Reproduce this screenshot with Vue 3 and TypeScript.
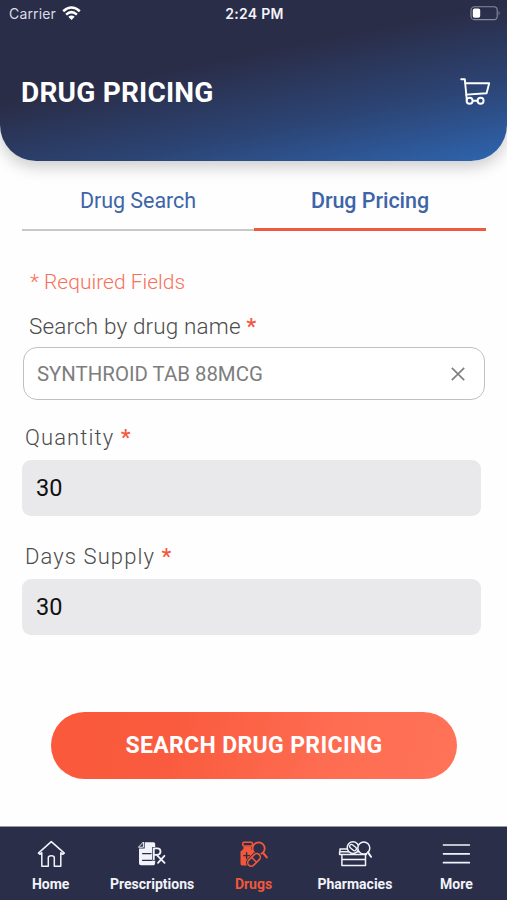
<script setup lang="ts">
import { ref } from 'vue'

type TabId = 'search' | 'pricing'
type NavId = 'home' | 'prescriptions' | 'drugs' | 'pharmacies' | 'more'

const activeTab = ref<TabId>('pricing')
const activeNav = ref<NavId>('drugs')
const drugName = ref('SYNTHROID TAB 88MCG')
const quantity = ref('30')
const daysSupply = ref('30')

const tabs: { id: TabId; label: string }[] = [
  { id: 'search', label: 'Drug Search' },
  { id: 'pricing', label: 'Drug Pricing' },
]

const navItems: { id: NavId; label: string }[] = [
  { id: 'home', label: 'Home' },
  { id: 'prescriptions', label: 'Prescriptions' },
  { id: 'drugs', label: 'Drugs' },
  { id: 'pharmacies', label: 'Pharmacies' },
  { id: 'more', label: 'More' },
]
</script>

<template>
  <div class="screen">
    <header class="header">
      <div class="status">
        <div class="carrier">
          <span>Carrier</span>
          <svg class="wifi" width="19" height="15" viewBox="0 0 19 15" fill="none" stroke="#fff" stroke-width="2.5">
            <path d="M1.2 5.3 Q9.5 -2.2 17.8 5.3" />
            <path d="M4.1 8.6 Q9.5 3.7 14.9 8.6" />
            <path d="M9.5 14 L6.3 10.8 Q9.5 8.2 12.7 10.8 Z" fill="#fff" stroke="none" />
          </svg>
        </div>
        <span class="time">2:24 PM</span>
        <svg class="battery" width="31" height="15" viewBox="0 0 31 15">
          <rect x="1" y="0.8" width="26.2" height="12.8" rx="3.4" fill="none" stroke="#888a9b" stroke-width="1.1" />
          <rect x="2.8" y="2.6" width="7.4" height="9.2" rx="1.8" fill="#fff" />
          <path d="M28.6 5 Q30.6 7.2 28.6 9.4 Z" fill="#888a9b" />
        </svg>
      </div>
      <div class="title-row">
        <h1>DRUG PRICING</h1>
        <svg class="cart" width="32" height="28" viewBox="0 0 32 28" fill="none" stroke="#fff" stroke-width="1.9" stroke-linecap="round" stroke-linejoin="round">
          <path d="M1.2 1.2 H4.8 L6.8 22" />
          <path d="M5.5 5.2 H29.2 L26.6 15.2 L6.2 16.6" />
          <circle cx="9.6" cy="22.7" r="3" />
          <circle cx="20.6" cy="22.7" r="3" />
          <path d="M12.8 22.7 H17.4" />
        </svg>
      </div>
    </header>

    <main class="content">
      <nav class="tabs">
        <button
          v-for="tab in tabs"
          :key="tab.id"
          class="tab"
          :class="{ active: tab.id === activeTab }"
          @click="activeTab = tab.id"
        >
          <span>{{ tab.label }}</span>
        </button>
      </nav>

      <p class="required">* Required Fields</p>

      <label class="label label-drug">Search by drug name <b>*</b></label>
      <div class="search-box">
        <span>{{ drugName }}</span>
        <svg width="16" height="16" viewBox="0 0 16 16" fill="none" stroke="#808080" stroke-width="1.7" @click="drugName = ''">
          <path d="M1.8 1.8 L14.2 14.2 M14.2 1.8 L1.8 14.2" />
        </svg>
      </div>

      <label class="label label-quantity">Quantity <b>*</b></label>
      <div class="field">{{ quantity }}</div>

      <label class="label label-days">Days Supply <b>*</b></label>
      <div class="field">{{ daysSupply }}</div>

      <button class="submit"><span>SEARCH DRUG PRICING</span></button>
    </main>

    <nav class="bottom">
      <button
        v-for="item in navItems"
        :key="item.id"
        class="nav-item"
        :class="{ active: item.id === activeNav }"
        @click="activeNav = item.id"
      >
        <svg class="nav-icon" width="34" height="28" viewBox="0 0 34 28" fill="none" stroke="currentColor" stroke-linecap="round" stroke-linejoin="round">
          <g v-if="item.id === 'home'" stroke-width="1.5">
            <path d="M17.3 1.6 L4.4 13.1 L5.8 14.3 L7.8 12.7 V26.2 H14.3 V17.8 Q14.3 15.8 17.3 15.8 Q20.3 15.8 20.3 17.8 V26.2 H26.8 V12.7 L28.9 14.3 L30.3 13.1 Z" />
          </g>
          <g v-else-if="item.id === 'prescriptions'">
            <path d="M9.7 2.2 H18.5 Q20.2 2.2 20.2 4 V7 H17.2 V20.8 H20.2 V22.5 Q20.2 25.2 18.2 25.2 H6 Q4 25.2 4 23.2 V8.5 H9.7 Z" fill="currentColor" stroke="none" />
            <path d="M8.4 2.4 V7.2 H3.8 Z" stroke-width="1" />
            <path d="M7.6 13.6 H16 M7.6 20.4 H16.4" stroke="#2a2e49" stroke-width="1.3" />
            <path d="M18.8 19.2 V8.4 H22.3 A3.2 3.2 0 0 1 22.3 14.8 H18.8 M21.6 14.8 L29.6 22.8 M29.4 15.8 L23 22.8" stroke-width="1.8" />
          </g>
          <g v-else-if="item.id === 'drugs'">
            <rect x="5.8" y="2.2" width="9.6" height="3.8" rx="1.3" stroke-width="1.6" />
            <path d="M6.4 6.5 H14.2 V9.2 L16.3 11.4 V18 L12.6 25.5 H5.2 Q3.5 25.5 3.5 23.8 V11.5 L6.4 9 Z" fill="currentColor" stroke="none" />
            <path d="M9.6 12.8 V18.4 M6.8 15.6 H12.4" stroke="#2a2e49" stroke-width="1.4" />
            <circle cx="21.6" cy="8.4" r="6.1" fill="#2a2e49" stroke-width="1.8" />
            <path d="M26 12.8 L29.8 17.4" stroke-width="2.2" />
            <rect x="9.6" y="16.4" width="14.8" height="7" rx="3.5" transform="rotate(-45 17 19.9)" fill="#2a2e49" stroke="#2a2e49" stroke-width="3.4" />
            <rect x="9.6" y="16.4" width="14.8" height="7" rx="3.5" transform="rotate(-45 17 19.9)" fill="#2a2e49" stroke-width="1.6" />
            <path d="M14.7 17.4 L19.5 22.2" stroke-width="1.5" />
          </g>
          <g v-else-if="item.id === 'pharmacies'" stroke-width="1.5">
            <path d="M1.6 11.8 H27 M1.6 11.8 V14.4 H28.5 M3.9 14.4 V25.5 H27.5 V14.4 M3.9 19.4 H27.5 M2 11.8 V8.9 H9" />
            <circle cx="15" cy="7.6" r="5.8" fill="#2a2e49" />
            <rect x="11.2" y="5.7" width="7.6" height="3.8" rx="1.9" transform="rotate(40 15 7.6)" stroke-width="1.3" />
            <circle cx="25.8" cy="8" r="6" fill="#2a2e49" />
            <path d="M30 12.4 L33 16.8" stroke-width="2" />
          </g>
          <g v-else stroke-width="1.7">
            <path d="M4.5 5 H30.3 M4.5 13.8 H30.3 M4.5 22.7 H30.3" />
          </g>
        </svg>
        <span>{{ item.label }}</span>
      </button>
    </nav>
  </div>
</template>

<style>
body {
  margin: 0;
  background: #fff;
}
</style>

<style scoped>
.screen {
  width: 507px;
  height: 900px;
  display: flex;
  flex-direction: column;
  overflow: hidden;
  background: #fefefe;
  font-family: Roboto, "Liberation Sans", sans-serif;
}
button {
  margin: 0;
  padding: 0;
  border: 0;
  background: none;
  font-family: inherit;
}
.header {
  flex: none;
  height: 161px;
  border-radius: 0 0 36px 36px;
  background: linear-gradient(168.5deg, #2a2d48 0%, #2a2d48 40%, #2c4474 70%, #2e65b0 100%);
  box-shadow: 0 6px 16px rgba(0, 0, 0, 0.2);
}
.status {
  height: 27px;
  padding: 0 7px 0 9px;
  display: grid;
  grid-template-columns: 1fr auto 1fr;
  align-items: center;
  color: #f4f4f8;
  font-family: Inter, sans-serif;
  font-size: 14px;
}
.carrier {
  display: flex;
  align-items: center;
  gap: 6px;
  color: #dcdde5;
  letter-spacing: 0.15px;
}
.wifi {
  margin-top: -1px;
}
.time {
  font-weight: 600;
  letter-spacing: 0.3px;
}
.battery {
  justify-self: end;
  margin-right: -1px;
}
.title-row {
  display: flex;
  justify-content: space-between;
  align-items: center;
  height: 131px;
  padding: 0 15px 0 21px;
}
h1 {
  margin: 0;
  color: #fff;
  font-size: 28px;
  font-weight: 700;
  letter-spacing: 0.2px;
}
.cart {
  margin-top: -1px;
}
.content {
  flex: 1;
  display: flex;
  flex-direction: column;
  align-items: stretch;
  padding: 0 21px 0 22px;
}
.tabs {
  display: flex;
  height: 70px;
}
.tab {
  flex: 1;
  box-sizing: border-box;
  height: 70px;
  padding-top: 11px;
  border-bottom: 2px solid #c8c8c8;
  color: #3d65a8;
  font-size: 21.5px;
  letter-spacing: -0.05px;
}
.tab.active {
  border-bottom: 3px solid #f2583c;
  font-weight: 500;
}
.required {
  margin: 38px 0 0 8px;
  color: #f9705a;
  font-size: 21px;
  font-weight: 300;
  line-height: 26px;
}
.label {
  color: #4c4c4c;
  font-size: 22px;
  font-weight: 300;
  line-height: 26px;
  white-space: nowrap;
}
.label b {
  color: #f4583e;
  font-weight: 500;
}
.label-drug {
  margin: 18px 0 0 7px;
  font-size: 22.5px;
  letter-spacing: 0.15px;
}
.search-box {
  display: flex;
  justify-content: space-between;
  align-items: center;
  box-sizing: border-box;
  height: 53px;
  margin: 8px 1px 0;
  padding: 0 18px 0 13px;
  border: 1.5px solid #c0c0c0;
  border-radius: 14px;
  background: #fff;
  color: #7d7d7d;
  font-size: 20.4px;
}
.label-quantity,
.label-days {
  padding-top: 1px;
  letter-spacing: 1.1px;
}
.label-quantity {
  margin: 24px 0 0 3px;
}
.label-days {
  margin: 27px 0 0 3px;
}
.field {
  display: flex;
  align-items: center;
  box-sizing: border-box;
  height: 56px;
  margin: 9px 5px 0 0;
  padding: 0 0 1px 14px;
  border-radius: 9px;
  background: #e9e9eb;
  color: #111;
  font-size: 23.5px;
}
.submit {
  height: 67px;
  margin: 77px 29px 0;
  border-radius: 34px;
  background: linear-gradient(105deg, #fa593a 0%, #fa5b3e 30%, #fe6d52 70%, #ff7359 100%);
  color: #fff;
  font-size: 23px;
  font-weight: 700;
  letter-spacing: 0.35px;
}
.bottom {
  flex: none;
  display: flex;
  box-sizing: border-box;
  height: 74px;
  border-top: 1px solid #9699a9;
  background: #2a2e49;
}
.nav-item {
  flex: 1;
  display: flex;
  flex-direction: column;
  align-items: center;
  padding-top: 13px;
  color: #f2f3fa;
  font-size: 14px;
  font-weight: 700;
  line-height: 16px;
}
.nav-icon {
  margin-bottom: 8px;
}
.nav-item.active {
  color: #f2573a;
}
</style>
